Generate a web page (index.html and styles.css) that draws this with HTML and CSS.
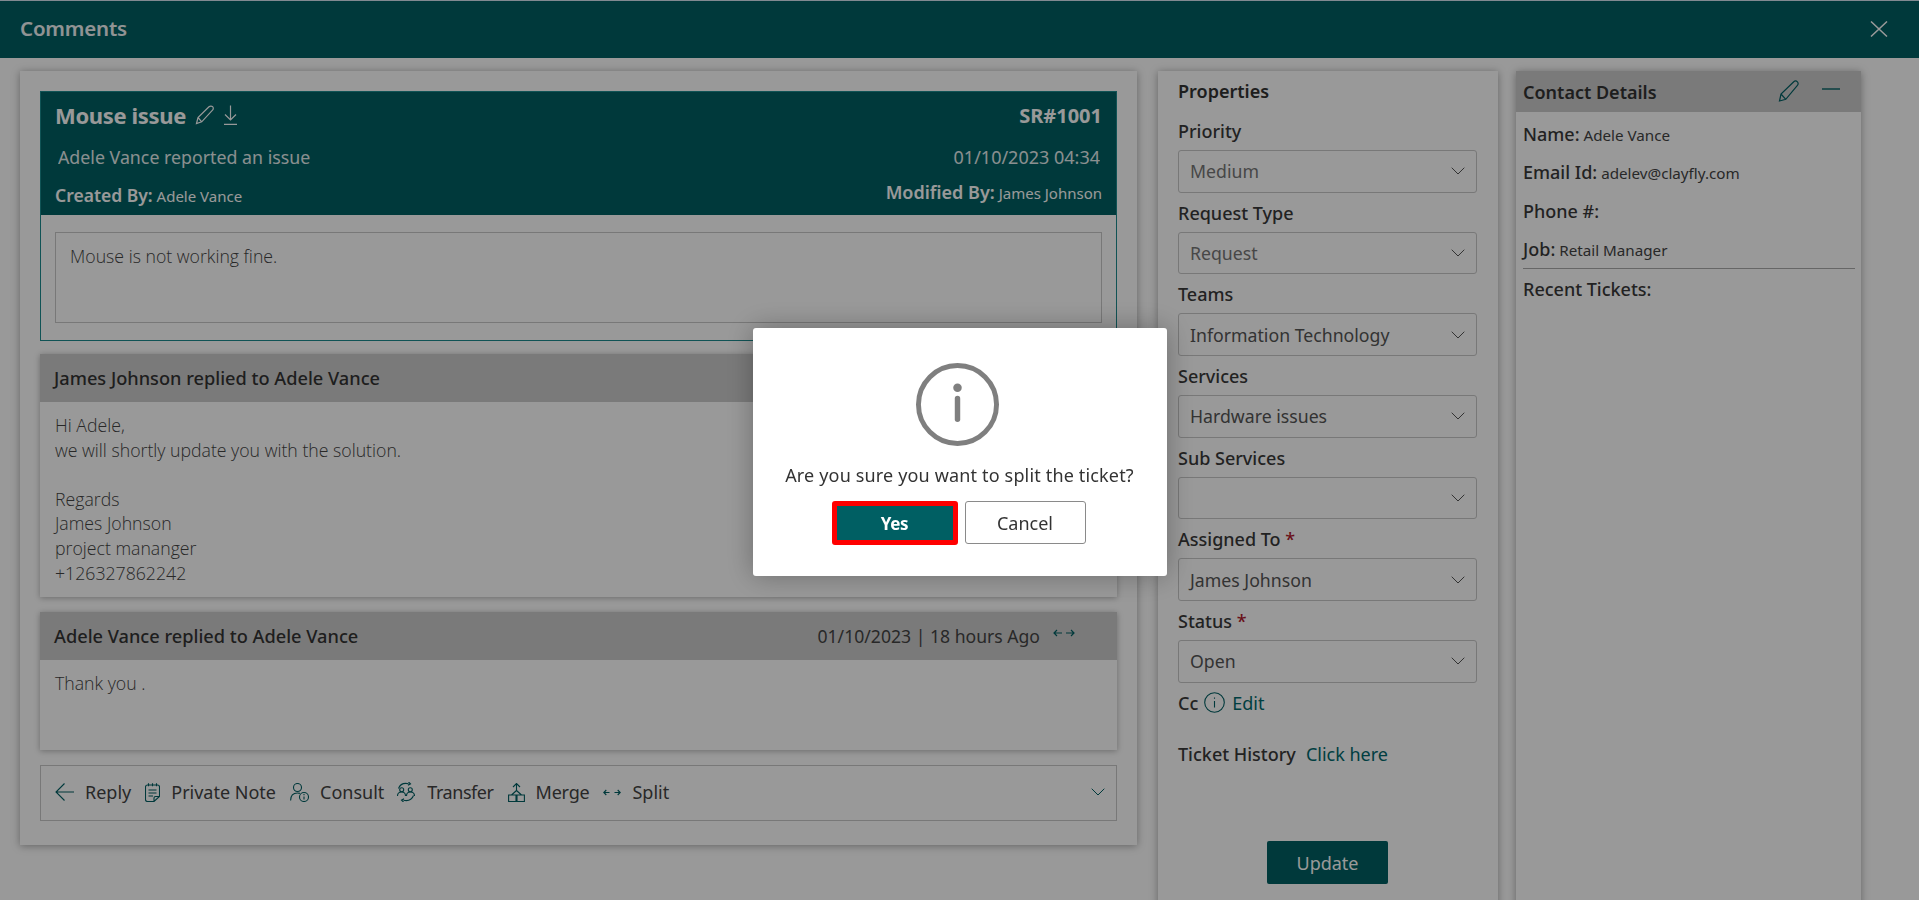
FILE: index.html
```html
<!DOCTYPE html>
<html lang="en">
<head>
<meta charset="utf-8">
<title>Comments</title>
<link rel="stylesheet" href="styles.css">
</head>
<body>
<div class="page">
  <header class="topbar">
    <h1 class="topbar-title">Comments</h1>
    <svg class="close" viewBox="0 0 18 16" aria-hidden="true"><path d="M1 0.5 17 15.5M17 0.5 1 15.5"/></svg>
  </header>
  <main class="layout">
    <section class="thread">
      <article class="ticket">
        <div class="ticket-head">
          <div class="row title-row">
            <div class="title-wrap">
              <span class="ticket-title">Mouse issue</span>
              <svg class="ti ti-pen" viewBox="0 0 20 20" aria-hidden="true"><path d="M1.500 18.500 3 12.500 14 1.800c1-1 2.700-1 3.600-.1s.9 2.500-.1 3.500L6.700 16.800 1.500 18.500ZM3 12.500l3.700 4.300"/></svg>
              <svg class="ti ti-down" viewBox="0 0 16 20" aria-hidden="true"><path d="M8 .5V15M2.500 9.500 8 15l5.500-5.500M1.500 19.300h13"/></svg>
            </div>
            <span class="sr">SR#1001</span>
          </div>
          <div class="row sub-row">
            <span class="reported">Adele Vance reported an issue</span>
            <span class="stamp">01/10/2023 04:34</span>
          </div>
          <div class="row by-row">
            <span class="by by-created"><b>Created By:</b> Adele Vance</span>
            <span class="by by-modified"><b>Modified By:</b> James Johnson</span>
          </div>
        </div>
        <div class="ticket-body">
          <div class="descr">Mouse is not working fine.</div>
        </div>
      </article>

      <article class="reply reply-long">
        <div class="reply-head"><span class="reply-who">James Johnson replied to Adele Vance</span></div>
        <div class="reply-body">Hi Adele,<br>we will shortly update you with the solution.<br><br>Regards<br>James Johnson<br>project mananger<br>+126327862242</div>
      </article>

      <article class="reply reply-short">
        <div class="reply-head">
          <span class="reply-who">Adele Vance replied to Adele Vance</span>
          <span class="reply-meta">
            <span class="reply-date">01/10/2023 | 18 hours Ago</span>
            <svg class="split-mini" viewBox="0 0 22 8" aria-hidden="true"><path d="M9 4H1M4 1 1 4l3 3M13 4h8M18 1l3 3-3 3"/></svg>
          </span>
        </div>
        <div class="reply-body">Thank you .</div>
      </article>

      <nav class="actions">
        <span class="action"><svg class="ai a-reply" viewBox="0 0 19 18" aria-hidden="true"><path d="M19 9H1M9.500.5 1 9l8.500 8.500"/></svg>Reply</span>
        <span class="action"><svg class="ai a-note" viewBox="0 0 15 19" aria-hidden="true"><path d="M2.500 2h10a2 2 0 0 1 2 2v9.500L9 18.500H2.500a2 2 0 0 1-2-2V4a2 2 0 0 1 2-2ZM3.500.2v3M7.500.2v3M11.500.2v3M3.500 7h8M3.500 10h8M3.500 13h4.500M9 18.500V15a1.500 1.500 0 0 1 1.500-1.500h4"/></svg>Private Note</span>
        <span class="action act-consult"><svg class="ai a-consult" viewBox="0 0 19 19" aria-hidden="true"><circle cx="7.500" cy="4.500" r="4"/><path d="M.6 17.500c0-4.500 2.600-7.500 6.900-7.500 .9 0 1.700.2 2.400.4"/><circle cx="14" cy="14" r="4.500"/><path d="M14 13.500v3M14 11v1.200"/></svg>Consult</span>
        <span class="action act-transfer"><svg class="ai a-transfer" viewBox="0 0 20 20" aria-hidden="true"><path d="M2.500 6.500C4 2.500 8 .8 12.500 1.700M12.500 0l2 1.800-2.500 1.400M17.500 13.500c-1.500 4-5.500 5.700-10 4.800M7.500 20l-2-1.800 2.500-1.400"/><circle cx="5.700" cy="7.800" r="2"/><circle cx="14.300" cy="7.800" r="2"/><path d="M1.500 14c0-2.300 1.700-4 4.200-4s3.800 1.700 3.800 4M10.500 14c0-2.300 1.400-4 3.800-4s4.200 1.700 4.200 4"/></svg>Transfer</span>
        <span class="action act-merge"><svg class="ai a-merge" viewBox="0 0 17 19" aria-hidden="true"><path d="M8.500.5v7M5 4l3.500-3.500L12 4M8.500 7.500 3.500 12M8.500 7.500l5 4.500M.6 12h7.400v6.500H.6ZM9 12h7.400v6.500H9Z"/></svg>Merge</span>
        <span class="action"><svg class="ai a-split" viewBox="0 0 18 7" aria-hidden="true"><path d="M6.500 3.500H.8M3.300 1 .8 3.500 3.300 6M11.500 3.500h5.700M14.700 1l2.500 2.500L14.700 6"/></svg>Split</span>
        <svg class="chev action-chev" viewBox="0 0 14 8" aria-hidden="true"><path d="M.7.7 7 7l6.300-6.300"/></svg>
      </nav>
    </section>

    <aside class="props">
      <h2 class="panel-title">Properties</h2>
      <div class="fields">
        <div class="field"><div class="label">Priority</div><div class="select muted"><span>Medium</span><svg class="chev" viewBox="0 0 14 8" aria-hidden="true"><path d="M.7.7 7 7l6.300-6.300"/></svg></div></div>
        <div class="field"><div class="label">Request Type</div><div class="select muted"><span>Request</span><svg class="chev" viewBox="0 0 14 8" aria-hidden="true"><path d="M.7.7 7 7l6.300-6.300"/></svg></div></div>
        <div class="field"><div class="label">Teams</div><div class="select"><span>Information Technology</span><svg class="chev" viewBox="0 0 14 8" aria-hidden="true"><path d="M.7.7 7 7l6.300-6.300"/></svg></div></div>
        <div class="field"><div class="label">Services</div><div class="select"><span>Hardware issues</span><svg class="chev" viewBox="0 0 14 8" aria-hidden="true"><path d="M.7.7 7 7l6.300-6.300"/></svg></div></div>
        <div class="field"><div class="label">Sub Services</div><div class="select"><span></span><svg class="chev" viewBox="0 0 14 8" aria-hidden="true"><path d="M.7.7 7 7l6.300-6.300"/></svg></div></div>
        <div class="field"><div class="label">Assigned To <i class="req">*</i></div><div class="select"><span>James Johnson</span><svg class="chev" viewBox="0 0 14 8" aria-hidden="true"><path d="M.7.7 7 7l6.300-6.300"/></svg></div></div>
        <div class="field"><div class="label">Status <i class="req">*</i></div><div class="select"><span>Open</span><svg class="chev" viewBox="0 0 14 8" aria-hidden="true"><path d="M.7.7 7 7l6.300-6.300"/></svg></div></div>
      </div>
      <div class="cc">
        <span class="label">Cc</span>
        <svg class="cc-info" viewBox="0 0 21 21" aria-hidden="true"><circle cx="10.500" cy="10.500" r="9.800"/><path d="M10.500 9v6.500M10.500 5.500v1.300"/></svg>
        <a class="link">Edit</a>
      </div>
      <div class="history">
        <span class="label">Ticket History</span>
        <a class="link">Click here</a>
      </div>
      <div class="update-wrap"><button class="update">Update</button></div>
    </aside>

    <aside class="contact">
      <div class="contact-head">
        <h2 class="panel-title">Contact Details</h2>
        <svg class="ci" viewBox="0 0 22 22" aria-hidden="true"><path d="M1.500 21 3 14 15.500 2c1.200-1.200 2.900-1.200 3.900-.2s1 2.700-.2 3.900L7.800 19.300 1.500 21ZM3 14l4.800 5.300"/></svg>
        <svg class="cm" viewBox="0 0 18 2" aria-hidden="true"><path d="M0 1h18"/></svg>
      </div>
      <div class="contact-body">
        <div class="kv"><b>Name:</b> Adele Vance</div>
        <div class="kv"><b>Email Id:</b> adelev@clayfly.com</div>
        <div class="kv"><b>Phone #:</b></div>
        <div class="kv"><b>Job:</b> Retail Manager</div>
        <div class="kv recent"><b>Recent Tickets:</b></div>
      </div>
    </aside>
  </main>
</div>

<div class="overlay">
  <div class="modal">
    <svg class="modal-icon" viewBox="0 0 84 84" aria-hidden="true"><circle cx="42" cy="42" r="39.500"/><path class="stem" d="M42 36v21"/><circle class="dot" cx="42" cy="25" r="4.300"/></svg>
    <p class="modal-text">Are you sure you want to split the ticket?</p>
    <div class="modal-btns">
      <button class="btn-yes">Yes</button>
      <button class="btn-cancel">Cancel</button>
    </div>
  </div>
</div>
</body>
</html>
```
FILE: styles.css
```css
* { box-sizing: border-box; }
html, body { margin: 0; height: 100%; overflow: hidden; }
body { font-family: "Noto Sans", "Open Sans", sans-serif; color: #333; background: #fff; font-size: 16px; }
b { font-weight: 600; }
h1, h2, p { margin: 0; }

.page { height: 900px; overflow: hidden; display: flex; flex-direction: column; }

.topbar { height: 58px; flex: none; background: #005f63; border-top: 1px solid #d8e6f2; display: flex; align-items: center; justify-content: space-between; padding: 0 31px 4px 20px; }
.topbar-title { font-size: 20.500px; font-weight: 600; color: #fff; letter-spacing: -.2px; opacity: .95; }
.close { width: 18px; height: 16px; fill: none; stroke: #fff; stroke-width: 1.5; margin-top: 2px; }

.layout { flex: 1; min-height: 0; display: grid; grid-template-columns: 1117px 361px 363px; padding: 13px 0 0 20px; }

.thread { align-self: start; background: #fff; height: 774px; padding: 20px 20px 0 20px; box-shadow: 0 1px 8px rgba(0,0,0,.35); display: flex; flex-direction: column; }

.ticket { height: 250px; border: 1px solid #1c8a8e; display: flex; flex-direction: column; flex: none; }
.ticket-head { height: 123px; background: #005f63; color: #fff; padding: 0 14px; flex: none; }
.row { display: flex; justify-content: space-between; align-items: center; }
.title-row { height: 46px; }
.title-wrap { display: flex; align-items: center; }
.ticket-title { font-size: 22px; font-weight: 700; letter-spacing: -.35px; margin-right: 9px; }
.ti { height: 20px; fill: none; stroke: #fff; stroke-width: 1.2; }
.ti-pen { width: 20px; margin-right: 7px; }
.ti-down { width: 17px; }
.sr { font-size: 20px; font-weight: 700; }
.sub-row { height: 36px; padding: 2px 2px 0 3px; }
.reported { font-size: 17.800px; font-weight: 400; opacity: .9; }
.stamp { font-size: 18px; opacity: .9; }
.by-row { height: 38px; }
.by { font-size: 15px; }
.by b { font-size: 17.500px; }
.by-created { margin-top: 4px; }
.by-modified { margin-top: -3px; }
.by-modified b { font-size: 18px; }
.ticket-body { flex: 1; padding: 17px 14px 0; }
.descr { height: 91px; border: 1px solid #c8c8c8; padding: 11px 14px; font-family: "Open Sans", sans-serif; font-size: 17.700px; font-weight: 300; color: #444; }

.reply { flex: none; background: #fff; box-shadow: 0 1px 6px rgba(0,0,0,.3); }
.reply-long { margin-top: 13px; height: 243px; }
.reply-short { margin-top: 15px; height: 138px; }
.reply-head { height: 48px; background: #ccc; display: flex; align-items: center; justify-content: space-between; padding: 0 14px; }
.reply-who { font-size: 18.200px; font-weight: 500; color: #333; }
.reply-meta { display: flex; align-items: center; gap: 13px; margin-right: 28px; }
.reply-date { font-size: 17.600px; color: #444; }
.split-mini { width: 22px; height: 8px; fill: none; stroke: #005f63; stroke-width: 1.2; margin-top: -6px; }
.reply-body { padding: 11px 15px 0; font-family: "Open Sans", sans-serif; font-size: 17.700px; font-weight: 300; line-height: 24.600px; color: #444; }

.actions { flex: none; margin-top: 15px; height: 56px; border: 1px solid #c8c8c8; display: flex; align-items: center; padding: 0 14px 2px; font-size: 18px; font-weight: 400; color: #444; }
.action { display: flex; align-items: center; gap: 11px; margin-right: 14px; }
.act-consult { margin-right: 12px; }
.act-transfer { letter-spacing: -.45px; }
.act-merge { letter-spacing: -.2px; }
.ai { flex: none; fill: none; stroke: #005f63; stroke-width: 1.1; }
.a-reply { width: 19px; height: 18px; }
.a-note { width: 15px; height: 19px; }
.a-consult { width: 19px; height: 19px; }
.a-transfer { width: 20px; height: 20px; }
.a-merge { width: 17px; height: 19px; }
.a-split { width: 18px; height: 7px; }

.chev { width: 14px; height: 8px; fill: none; stroke: #555; stroke-width: 1; flex: none; }
.action-chev { margin-left: auto; margin-right: -3px; stroke: #005f63; }

.props { background: #fff; margin-left: 21px; padding: 9px 21px 30px 20px; box-shadow: 0 1px 8px rgba(0,0,0,.35); }
.panel-title { font-size: 18px; line-height: 22px; font-weight: 600; color: #333; }
.fields { margin-top: 18px; display: flex; flex-direction: column; gap: 9px; }
.label { font-size: 18px; line-height: 22px; font-weight: 500; color: #3a3a3a; }
.field .label { margin-bottom: 8px; }
.select { height: 42.670px; border: 1px solid #c8c8c8; border-radius: 3px; display: flex; align-items: center; justify-content: space-between; padding: 0 11px; font-size: 17.700px; color: #555; }
.select.muted { color: #777; }
.req { color: #b01c2e; font-style: normal; }

.cc { margin-top: 9px; height: 22px; display: flex; align-items: center; gap: 6px; }
.cc-info { width: 21px; height: 21px; fill: none; stroke: #005f63; stroke-width: 1.1; }
.link { font-size: 18px; color: #00696d; margin-left: 1px; }
.history { margin-top: 29px; height: 22px; display: flex; align-items: center; gap: 9px; }
.update-wrap { margin-top: 76px; display: flex; justify-content: center; }
.update { width: 121px; height: 43px; padding: 2px 0 0; border: 0; border-radius: 2px; background: #005f63; color: #fff; font: 400 18px "Noto Sans", sans-serif; }

.contact { background: #fff; margin-left: 18px; box-shadow: 0 1px 8px rgba(0,0,0,.35); }
.contact-head { height: 41px; background: #ccc; display: flex; align-items: center; padding: 0 21px 0 7px; }
.contact-head .panel-title { flex: 1; }
.ci { width: 22px; height: 22px; fill: none; stroke: #005f63; stroke-width: 1.2; margin-right: 22px; margin-top: -2px; }
.cm { width: 18px; height: 2px; fill: none; stroke: #005f63; stroke-width: 1.4; margin-top: -6px; }
.contact-body { padding: 11px 6px 0 7px; }
.kv { height: 38.300px; line-height: 22px; font-size: 15.200px; color: #444; }
.kv b { font-size: 18px; font-weight: 500; color: #3a3a3a; }
.recent { margin-top: -8px; padding-top: 9px; height: 44px; border-top: 1px solid #aaa; }

.overlay { position: fixed; inset: 0; background: rgba(0,0,0,.4); display: flex; align-items: center; justify-content: center; padding-top: 4px; }
.modal { width: 414px; height: 248px; background: #fff; border-radius: 3px; box-shadow: 0 0 28px rgba(0,0,0,.3); display: flex; flex-direction: column; align-items: center; padding-top: 35px; }
.modal-icon { width: 83px; height: 83px; fill: none; stroke: #7f7f7f; stroke-width: 5; flex: none; margin-right: 5px; }
.modal-icon .stem { stroke-width: 5.500; stroke-linecap: round; }
.modal-icon .dot { fill: #7f7f7f; stroke: none; }
.modal-text { margin-top: 18px; font-size: 18px; line-height: 22px; letter-spacing: .16px; color: #333; }
.modal-btns { margin-top: 15px; margin-right: 2px; display: flex; gap: 7px; align-items: flex-start; }
.btn-yes { width: 126px; height: 44px; background: #005f63; border: 5px solid #f00; border-radius: 3px; color: #fff; font: 700 17px "Noto Sans", sans-serif; letter-spacing: -.3px; }
.btn-cancel { width: 121px; height: 43px; background: #fff; border: 1px solid #8a8a8a; border-radius: 3px; color: #333; font: 400 18px "Noto Sans", sans-serif; }
```
